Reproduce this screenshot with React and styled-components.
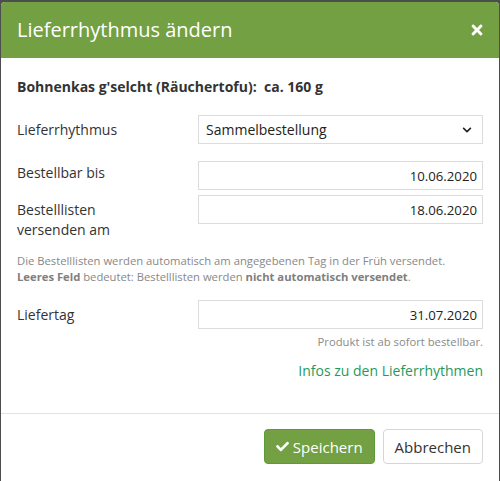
import React from "react";
import styled, { createGlobalStyle } from "styled-components";
import { FaCheck, FaTimes, FaChevronDown } from "react-icons/fa";

const GlobalStyle = createGlobalStyle`
  *, *::before, *::after {
    box-sizing: border-box;
  }
  html, body {
    margin: 0;
    padding: 0;
    background: #4d4d4d;
    font-family: "Open Sans", "Noto Sans", sans-serif;
  }
`;

const Modal = styled.div`
  margin: 2px 1px 0 1px;
  height: 479px;
  background: #fff;
  border-radius: 4px 4px 0 0;
  overflow: hidden;
  display: flex;
  flex-direction: column;
`;

const Header = styled.div`
  height: 56px;
  flex-shrink: 0;
  background: #72a043;
  display: flex;
  align-items: center;
  justify-content: space-between;
  padding: 0 16px 0 16px;
`;

const Title = styled.h4`
  margin: 0;
  color: #fff;
  font-size: 20px;
  font-weight: 400;
  line-height: 26px;
`;

const Close = styled.span`
  color: #fff;
  font-size: 16px;
  display: flex;
  margin-right: -2px;
`;

const Body = styled.div`
  padding: 20px 16px 0 16px;
  flex: 1;
  color: #333;
`;

const Product = styled.p`
  margin: 0 0 19px 0;
  font-size: 14px;
  font-weight: 700;
  line-height: 18px;
  white-space: pre;
`;

const Row = styled.div`
  display: grid;
  grid-template-columns: 181px 1fr;
  margin-bottom: ${(p) => p.gap || 0}px;
`;

const Label = styled.label`
  font-size: 14px;
  line-height: 20px;
  padding-top: ${(p) => p.top}px;
`;

const Field = styled.div`
  height: 29px;
  border: 1px solid #dcdcdc;
  display: flex;
  align-items: center;
  justify-content: ${(p) => (p.select ? "space-between" : "flex-end")};
  padding: ${(p) => (p.select ? "0 10px 0 7px" : "0 5px 0 7px")};
  font-size: ${(p) => (p.select ? 14 : 13.2)}px;
  color: #222;
`;

const Chevron = styled.span`
  display: flex;
  font-size: 10px;
  color: #222;
`;

const Help = styled.p`
  margin: 13px 0 16px 0;
  font-size: 11.25px;
  line-height: 15.5px;
  color: #888;
  b {
    font-weight: 700;
    color: #808080;
  }
`;

const Note = styled.p`
  margin: 3px 0 0 0;
  text-align: right;
  font-size: 11.25px;
  line-height: 20px;
  color: #8a8a8a;
`;

const Link = styled.a`
  display: block;
  margin-top: 9px;
  text-align: right;
  font-size: 14px;
  line-height: 20px;
  color: #1f9a5c;
  text-decoration: none;
`;

const Footer = styled.div`
  border-top: 1px solid #e3e3e3;
  height: 68px;
  flex-shrink: 0;
  display: flex;
  justify-content: flex-end;
  align-items: flex-start;
  gap: 8px;
  padding: 15px 16px 0 0;
`;

const Button = styled.button`
  height: 35px;
  border-radius: 4px;
  font-family: "Open Sans", "Noto Sans", sans-serif;
  font-size: 15px;
  display: flex;
  align-items: center;
  gap: 4px;
  padding: 0 11px;
  cursor: pointer;
  background: ${(p) => (p.primary ? "#72a043" : "#fff")};
  color: ${(p) => (p.primary ? "#fff" : "#333")};
  border: 1px solid ${(p) => (p.primary ? "#5e9a3a" : "#d6d6d6")};
`;

export default function App() {
  return (
    <>
      <GlobalStyle />
      <Modal>
        <Header>
          <Title>Lieferrhythmus ändern</Title>
          <Close>
            <FaTimes />
          </Close>
        </Header>
        <Body>
          <Product>Bohnenkas g'selcht (Räuchertofu):  ca. 160 g</Product>
          <Row gap={17}>
            <Label top={5}>Lieferrhythmus</Label>
            <Field select>
              Sammelbestellung
              <Chevron>
                <FaChevronDown />
              </Chevron>
            </Field>
          </Row>
          <Row gap={5}>
            <Label top={2}>Bestellbar bis</Label>
            <Field>10.06.2020</Field>
          </Row>
          <Row>
            <Label top={5}>
              Bestelllisten
              <br />
              versenden am
            </Label>
            <Field>18.06.2020</Field>
          </Row>
          <Help>
            Die Bestelllisten werden automatisch am angegebenen Tag in der Früh versendet.
            <br />
            <b>Leeres Feld</b> bedeutet: Bestelllisten werden <b>nicht automatisch versendet</b>.
          </Help>
          <Row>
            <Label top={5}>Liefertag</Label>
            <Field>31.07.2020</Field>
          </Row>
          <Note>Produkt ist ab sofort bestellbar.</Note>
          <Link href="#">Infos zu den Lieferrhythmen</Link>
        </Body>
        <Footer>
          <Button primary>
            <FaCheck size={13} />
            Speichern
          </Button>
          <Button>Abbrechen</Button>
        </Footer>
      </Modal>
    </>
  );
}
